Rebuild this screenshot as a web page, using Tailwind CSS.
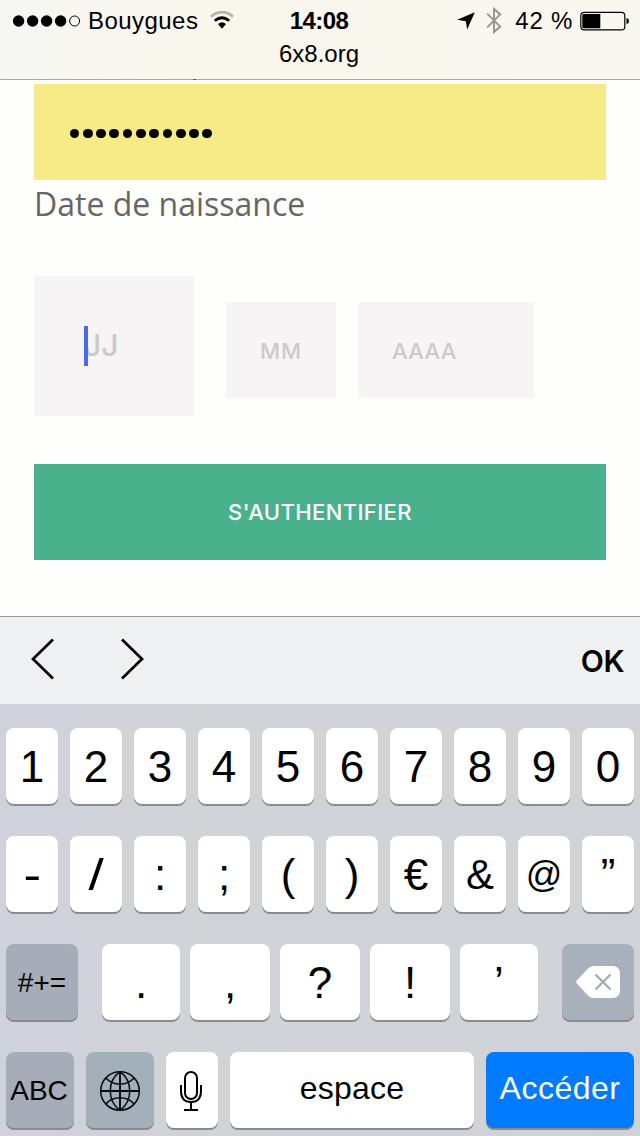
<!DOCTYPE html>
<html lang="fr">
<head>
<meta charset="utf-8">
<title>6x8.org</title>
<script src="https://cdn.jsdelivr.net/npm/@tailwindcss/browser@4"></script>
</head>
<body class="w-[640px] h-[1136px] overflow-hidden bg-[#fefefd] text-black font-['Liberation_Sans',Arial,sans-serif]">
<div class="flex flex-col h-[1136px]">

  <header class="relative h-20 shrink-0 border-b border-[#aaa9a6] bg-linear-to-r from-[#f6f7f4] via-[#f9f6ec] via-30% to-[#f9f7f1] text-2xl leading-none">
    <div class="grid grid-cols-[1fr_auto_1fr] items-center h-[41px] pl-[13px] pr-[11px]">
      <div class="flex items-center">
        <svg class="w-[68px] h-3 shrink-0" viewBox="0 0 68 12"><circle cx="5.6" cy="6" r="5.7"/><circle cx="19.6" cy="6" r="5.7"/><circle cx="33.6" cy="6" r="5.7"/><circle cx="47.6" cy="6" r="5.7"/><circle cx="61.6" cy="6" r="5" fill="none" stroke="#000" stroke-width="1"/></svg>
        <span class="ml-[7px] pt-px tracking-[0.45px]">Bouygues</span>
        <svg class="ml-[12px] w-6 h-[19px] shrink-0" viewBox="0 0 24 19" fill="none"><path d="M1 5.6Q12 -3.4 23 5.6" stroke="#b5b3ac" stroke-width="2.8"/><path d="M4.8 9.8Q12 3.6 19.2 9.8" stroke="#000" stroke-width="2.8"/><path d="M8 13Q12 9.6 16 13L12 17.8Z" fill="#000"/></svg>
      </div>
      <span class="-ml-1 pt-px font-bold tracking-[-0.6px]">14:08</span>
      <div class="flex items-center justify-end">
        <svg class="w-[18px] h-[18px] shrink-0" viewBox="0 0 18 18"><path d="M17.8 .2L10.2 17.6L8.8 9.2L.2 7.8Z"/></svg>
        <svg class="ml-[11px] w-4 h-[27px] shrink-0" viewBox="0 0 16 27" fill="none" stroke="#999790" stroke-width="2"><path d="M1.2 6.6L14.2 19.6L8 25V2L14.2 7.4L1.2 20.4"/></svg>
        <span class="ml-[13px] pt-px tracking-[0.75px] whitespace-nowrap">42 %</span>
        <svg class="ml-[7px] -mr-px w-[50px] h-5 shrink-0" viewBox="0 0 50 20"><rect x=".8" y="1.3" width="44" height="17.6" rx="3.2" fill="none" stroke="#000" stroke-width="1.2"/><path d="M3.5 3H20.3V17.3H3.5Q2.3 17.3 2.3 16V4.2Q2.3 3 3.5 3ZM46.5 7Q49 7.6 49 10Q49 12.6 46.5 13.2Z"/></svg>
      </div>
    </div>
    <div class="pt-px pr-[2px] text-center">6x8.org</div>
    <div class="absolute left-[193px] top-[79px] w-[3px] h-px bg-[#555]"></div>
  </header>

  <main class="h-[536px] shrink-0 px-[34px] pt-1">
    <div class="flex items-center gap-[3.5px] h-24 bg-[#f7eb88] pl-[35.5px] pt-[3px]">
      <i class="size-[9.8px] rounded-full bg-black"></i><i class="size-[9.8px] rounded-full bg-black"></i><i class="size-[9.8px] rounded-full bg-black"></i><i class="size-[9.8px] rounded-full bg-black"></i><i class="size-[9.8px] rounded-full bg-black"></i><i class="size-[9.8px] rounded-full bg-black"></i><i class="size-[9.8px] rounded-full bg-black"></i><i class="size-[9.8px] rounded-full bg-black"></i><i class="size-[9.8px] rounded-full bg-black"></i><i class="size-[9.8px] rounded-full bg-black"></i><i class="size-[9.8px] rounded-full bg-black"></i>
    </div>
    <div class="h-24 text-[32px] leading-[48px] text-[#666] font-['Open_Sans','Noto_Sans',sans-serif]">Date de naissance</div>
    <div class="flex items-center h-[140px] text-[#cbcac9] leading-none font-['Inter',sans-serif]">
      <div class="flex items-center w-40 h-[140px] bg-[#f6f4f4] pl-[50px]">
        <span class="relative z-10 w-1 h-10 bg-[#486ce8]"></span>
        <span class="-ml-[4px] -mt-[3px] text-[30px] font-medium">JJ</span>
      </div>
      <div class="flex items-center ml-8 mt-[8px] w-[110px] h-24 bg-[#f6f4f4] pl-[34px] pt-px text-[22px] font-medium tracking-[1px]">MM</div>
      <div class="flex items-center ml-[22px] mt-[8px] w-44 h-24 bg-[#f6f4f4] pl-[34px] pt-px text-[22px] font-medium tracking-[0.3px]">AAAA</div>
    </div>
    <div class="flex items-center justify-center mt-12 h-24 bg-[#49b18c] text-white text-[22px] font-medium leading-none tracking-[0.4px] font-['Inter',sans-serif]">S'AUTHENTIFIER</div>
  </main>

  <div class="flex items-center h-22 shrink-0 border-t border-[#9a9a9b] bg-[#eff0f2] pl-[30px] pr-4">
    <svg class="w-[26px] h-[42px] -mt-[3px]" viewBox="0 0 26 42" fill="none" stroke="#000" stroke-width="2.7"><path d="M23 1.5L3 21L23 40.5"/></svg>
    <svg class="ml-[64px] w-[26px] h-[42px] -mt-[3px]" viewBox="0 0 26 42" fill="none" stroke="#000" stroke-width="2.7"><path d="M2 1.5L22 21L2 40.5"/></svg>
    <span class="ml-auto pt-px text-[30px] leading-none font-semibold tracking-[-0.5px] font-['Inter',sans-serif]">OK</span>
  </div>

  <div class="flex flex-col gap-8 h-[432px] shrink-0 bg-linear-to-r from-[#cfd2dc] via-[#d1d3d7] via-30% to-[#d1d2d8] px-[6px] pt-6 text-[44px] leading-none [&_b]:flex [&_b]:items-center [&_b]:justify-center [&_b]:h-[76px] [&_b]:shrink-0 [&_b]:font-normal [&_b]:rounded-lg [&_b]:shadow-[0_2px_0_#898b8f]">
    <div class="grid grid-cols-10 gap-3 [&_b]:pt-[2px]">
      <b class="bg-white">1</b><b class="bg-white">2</b><b class="bg-white">3</b><b class="bg-white">4</b><b class="bg-white">5</b><b class="bg-white">6</b><b class="bg-white">7</b><b class="bg-white">8</b><b class="bg-white">9</b><b class="bg-white">0</b>
    </div>
    <div class="grid grid-cols-10 gap-3 [&_b]:pt-[2px]">
      <b class="bg-white"><span class="scale-x-120">-</span></b><b class="bg-white"><span class="scale-x-125">/</span></b><b class="bg-white">:</b><b class="bg-white">;</b><b class="bg-white">(</b><b class="bg-white">)</b><b class="bg-white">€</b><b class="bg-white text-[42px]">&amp;</b><b class="bg-white"><span class="text-[36px]">@</span></b><b class="bg-white">”</b>
    </div>
    <div class="flex [&_b]:pt-[2px]">
      <b class="w-18 bg-[#a6adb8] text-[28px]">#+=</b>
      <b class="ml-6 w-[78px] bg-white">.</b>
      <b class="ml-[10px] w-20 bg-white">,</b>
      <b class="ml-[10px] w-20 bg-white">?</b>
      <b class="ml-[10px] w-20 bg-white">!</b>
      <b class="ml-[10px] w-[78px] bg-white">’</b>
      <b class="ml-6 w-18 bg-[#a8b0bb]"><svg class="w-11 h-8 -mt-[2px]" viewBox="0 0 44 32"><path d="M1 14.2L12 2.5Q14.5 0 18 0H36Q44 0 44 8V24Q44 32 36 32H18Q14.5 32 12 29.5L1 17.8Q-.6 16 1 14.2Z" fill="#fff"/><path d="M19.5 8.5L34.5 23.5M34.5 8.5L19.5 23.5" stroke="#a8abb2" stroke-width="2.4"/></svg></b>
    </div>
    <div class="flex gap-3">
      <b class="w-17 bg-[#a6adb9] text-[28px] pt-[2px] pr-[2px]">ABC</b>
      <b class="w-17 bg-[#a4b0b9]"><svg class="w-[42px] h-[42px] mt-[2px]" viewBox="0 0 42 42" fill="none" stroke="#050a10" stroke-width="1.5"><circle cx="21" cy="21" r="19.3"/><path d="M21 1.5V40.5M1.5 21H40.5" stroke-width="1.9"/><path d="M21 1.7C8 11 8 31 21 40.3M21 1.7C34 11 34 31 21 40.3M7 8C14 16.3 28 16.3 35 8M7 34C14 25.7 28 25.7 35 34"/></svg></b>
      <b class="w-13 bg-white"><svg class="w-6 h-[42px] mt-[2px] -ml-[2px]" viewBox="0 0 24 42" fill="none" stroke="#000" stroke-width="2"><rect x="6" y="2" width="12" height="27" rx="6"/><path d="M2 15V21Q2 32 12 32Q22 32 22 21V15M12 32V40M5 40H19"/></svg></b>
      <b class="w-61 bg-white text-[32px] pb-[4px] tracking-[0.25px]">espace</b>
      <b class="w-37 bg-[#007aff] text-white text-[32px] pb-[4px] tracking-[0.5px]">Accéder</b>
    </div>
  </div>
</div>
</body>
</html>
